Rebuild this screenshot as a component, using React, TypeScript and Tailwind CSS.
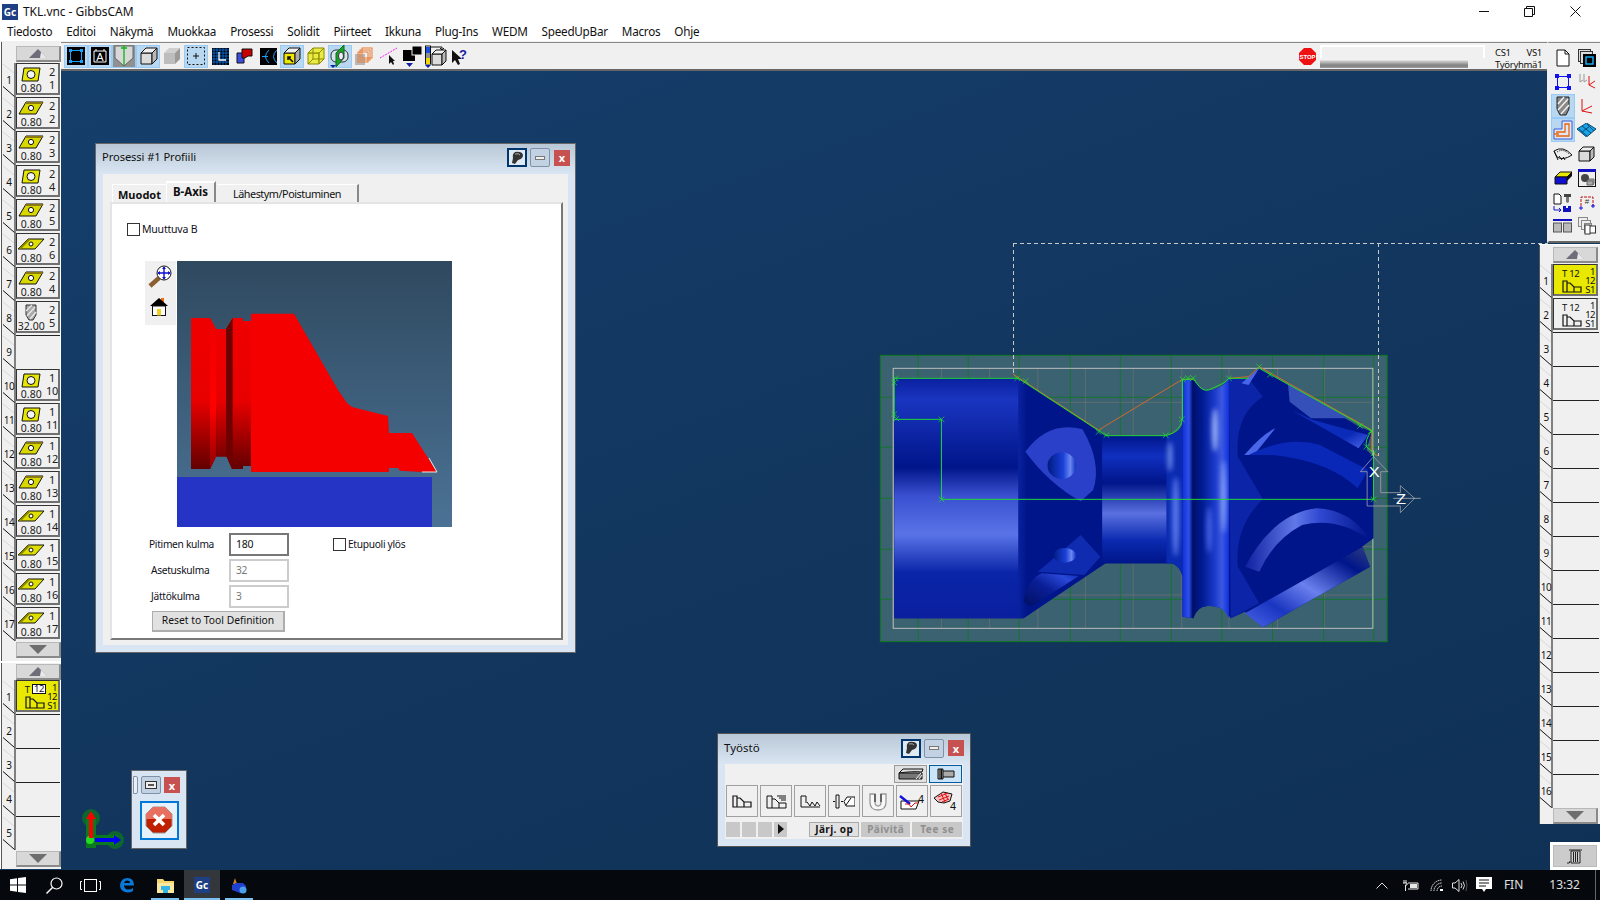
import React from "react";

type Kind = "sq" | "para" | "thin" | "mill";

const Tab = () => (
  <svg className="absolute left-0 top-0 w-[14px] h-[34px]" viewBox="0 0 14 34">
    <path d="M1 1 L12 10" stroke="#d8d8d8" fill="none" />
    <path d="M1 23.5 L12.5 33.5 M13 0 V34" stroke="#111" fill="none" />
  </svg>
);

const Arrow = ({ up }: { up?: boolean }) => (
  <div className="h-[16px] w-[45px] ml-[14px] bg-[#d8d8d8] border border-[#b8b8b8] border-r-2 border-b-2 border-r-[#8a8a8a] border-b-[#8a8a8a] flex items-center justify-center">
    <svg width="20" height="11" viewBox="0 0 20 11">
      {up ? (
        <>
          <path d="M10 1 L19 10 H1Z" fill="#6e6e7a" />
          <path d="M13 4 L19 10 H12Z" fill="#fff" opacity=".85" />
        </>
      ) : (
        <path d="M1 1 H19 L10 10Z" fill="#6e6e6e" />
      )}
    </svg>
  </div>
);

const InsertIcon = ({ kind }: { kind: Kind }) => {
  if (kind === "sq")
    return (
      <svg width="20" height="15" viewBox="0 0 20 15">
        <path d="M3 1 H19 L17 14 H1Z" fill="#e6e600" stroke="#111" />
        <circle cx="10" cy="7.5" r="4" fill="#f4f4f4" stroke="#111" />
      </svg>
    );
  if (kind === "para")
    return (
      <svg width="26" height="15" viewBox="0 0 26 15">
        <path d="M8 1 H25 L18 13 H1Z" fill="#d8d800" stroke="#111" />
        <path d="M8 1 H25 L24 3 H7Z" fill="#8a7a10" />
        <circle cx="13" cy="7" r="2.6" fill="#fff" stroke="#111" />
      </svg>
    );
  if (kind === "thin")
    return (
      <svg width="28" height="15" viewBox="0 0 28 15">
        <path d="M11 2 H27 L18 12 H1Z" fill="#dede00" stroke="#111" />
        <path d="M1 12 L11 2 H14 L5 11Z" fill="#888800" />
        <circle cx="14" cy="7" r="2" fill="#fff" stroke="#111" />
      </svg>
    );
  return (
    <svg width="12" height="17" viewBox="0 0 12 17">
      <path d="M1 1 H11 V11 L8 16 H4 L1 11Z" fill="#a8a8a8" stroke="#333" />
      <path d="M1 7 L7 1 M2 12 L10 3 M5 15 L11 8" stroke="#e8e8e8" strokeWidth="1.4" />
    </svg>
  );
};

const ToolRow = ({ n, top, bot, kind, size = "0.80" }: { n: number; top?: string; bot?: string; kind?: Kind; size?: string }) => (
  <div className="relative h-[34px] flex">
    <Tab />
    <div className="w-[14px] pl-[1px] pr-[1px] flex items-center justify-center text-[10px] tracking-[-0.5px] text-[#111] leading-none">{n}</div>
    {kind ? (
      <div className="w-[45px] h-[32px] bg-[#f0f0f0] border border-[#333] border-r-2 border-b-2 border-r-[#707070] border-b-[#707070] flex text-[11px] leading-none text-[#222]">
        <div className="w-[29px] flex flex-col items-center justify-between pt-[2px]">
          <div className="h-[17px] flex items-center">
            <InsertIcon kind={kind} />
          </div>
          <span className="text-[10.5px] leading-[10px]">{size}</span>
        </div>
        <div className="flex-1 flex flex-col items-center pt-[2px] gap-[2px] text-[11px] tracking-[-0.5px]">
          <span>{top}</span>
          <span>{bot}</span>
        </div>
      </div>
    ) : (
      <div className="w-[46px] h-[34px] border-t border-[#222]" />
    )}
  </div>
);

const Profile = ({ w = 20 }: { w?: number }) => (
  <svg width={w} height="13" viewBox="0 0 20 13">
    <path d="M1 1 H5 V3 H8 L12 7 H19 V12 H1Z M5 3 V12 M12 7 V12" fill="none" stroke="#111" strokeWidth="1.2" />
  </svg>
);

const OpRow = ({ n, yellow, boxed }: { n: number; yellow?: boolean; boxed?: boolean }) => (
  <div className="relative h-[34px] flex">
    <Tab />
    <div className="w-[14px] flex items-center justify-center text-[10px] text-[#111] leading-none">{n}</div>
    <div className={`w-[45px] h-[32px] border border-[#333] border-r-2 border-b-2 border-r-[#707070] border-b-[#707070] flex text-[9.5px] leading-[9px] text-[#111] ${yellow ? "bg-[#e8e800]" : "bg-[#f0f0f0]"}`}>
      <div className="flex-1 pt-[1px] flex flex-col">
        <div className="flex items-center gap-[2px] h-[14px] pl-[8px]">
          <span>T</span>
          {boxed ? <span className="bg-white border border-[#111] px-[1px] leading-[8px] tracking-[-0.5px]">12</span> : <span className="tracking-[-0.5px]">12</span>}
        </div>
        <div className="pl-[8px]"><Profile w={20} /></div>
      </div>
      <div className="w-[12px] flex flex-col items-end pr-[1px] pt-[2px] tracking-[-0.5px]">
        <span>1</span>
        <span>12</span>
        <span>S1</span>
      </div>
    </div>
  </div>
);

const EmptyRow = ({ n }: { n: number }) => <ToolRow n={n} />;

const leftTools: { top: string; bot: string; kind: Kind; size?: string }[] = [
  { top: "2", bot: "1", kind: "sq" },
  { top: "2", bot: "2", kind: "para" },
  { top: "2", bot: "3", kind: "para" },
  { top: "2", bot: "4", kind: "sq" },
  { top: "2", bot: "5", kind: "para" },
  { top: "2", bot: "6", kind: "thin" },
  { top: "2", bot: "4", kind: "para" },
  { top: "2", bot: "5", kind: "mill", size: "32.00" },
];
const leftTools2: { top: string; bot: string; kind: Kind }[] = [
  { top: "1", bot: "10", kind: "sq" },
  { top: "1", bot: "11", kind: "sq" },
  { top: "1", bot: "12", kind: "para" },
  { top: "1", bot: "13", kind: "para" },
  { top: "1", bot: "14", kind: "thin" },
  { top: "1", bot: "15", kind: "thin" },
  { top: "1", bot: "16", kind: "thin" },
  { top: "1", bot: "17", kind: "thin" },
];

const TB = ({ active, children }: { active?: boolean; children: React.ReactNode }) => (
  <div className={`w-[24px] h-[23px] shrink-0 flex items-center justify-center border ${active ? "bg-[#b8d8f2] border-[#98cbf5]" : "border-transparent"}`}>{children}</div>
);
const S = ({ children, w = 20, h = 20 }: { children: React.ReactNode; w?: number; h?: number }) => (
  <svg width={w} height={h} viewBox={`0 0 ${w} ${h}`}>
    {children}
  </svg>
);
const Cube = ({ fill = "#dcdcdc", stroke = "#111" }: { fill?: string; stroke?: string }) => (
  <S>
    <g stroke={stroke} fill={fill} strokeWidth="1">
      <path d="M3 7 H14 V18 H3Z" />
      <path d="M3 7 L8 2 H19 L14 7Z" fill="#f0f0f0" />
      <path d="M14 7 L19 2 V13 L14 18Z" fill="#b8b8b8" />
    </g>
  </S>
);

const toolbar: { a?: boolean; i: React.ReactNode }[] = [
  { a: true, i: <S w={18} h={18}><rect width="18" height="18" fill="#000" /><rect x="3.5" y="3.5" width="11" height="11" fill="none" stroke="#19a3ff" /><path d="M2 2h3v3H2zM13 2h3v3h-3zM2 13h3v3H2zM13 13h3v3h-3z" fill="#19a3ff" /></S> },
  { a: true, i: <S w={18} h={18}><rect width="18" height="18" fill="#000" /><path d="M3 4 V15 H15 V4 H13 V2 M3 4 H5 V2 M5 4 H13" fill="none" stroke="#fff" /><text x="9" y="14" fontSize="11" fill="#fff" textAnchor="middle" fontFamily="Liberation Sans">A</text></S> },
  { a: true, i: <S w={22} h={22}><rect width="22" height="22" fill="#909090" /><path d="M2 1 H20 V13 L11 21 L2 13Z" fill="#d8d8d8" stroke="#666" /><path d="M11 0 V20 M8 3 H14" stroke="#0bb515" strokeWidth="1.3" /></S> },
  { a: true, i: <Cube /> },
  { i: <S><path d="M2 7 H13 V18 H2Z" fill="#bdbdbd" /><path d="M2 7 L7 2 H18 L13 7Z" fill="#cfcfcf" /><path d="M13 7 L18 2 V13 L13 18Z" fill="#9a9a9a" /></S> },
  { a: true, i: <S w={18} h={18}><rect x=".5" y=".5" width="17" height="17" fill="none" stroke="#111" strokeDasharray="2 2" /><path d="M9 6 V12 M6 9 H12" stroke="#111" /></S> },
  { i: <S w={17} h={17}><rect width="17" height="17" fill="#000" /><path d="M2 0V17M5 0V17M8 0V17M11 0V17M14 0V17M0 2H17M0 5H17M0 8H17M0 11H17M0 14H17" stroke="#0a73e8" strokeWidth=".8" /><path d="M7 4 V12 H14" stroke="#fff" strokeWidth="1.3" fill="none" /></S> },
  { i: <S w={17} h={16}><path d="M1 5 H8 V15 H1Z" fill="#3b4ee0" stroke="#111" /><path d="M6 1 H16 V8 H12 L9 10 H6Z" fill="#c80000" stroke="#111" /></S> },
  { i: <S w={17} h={17}><rect width="17" height="17" fill="#000" /><path d="M9 2 Q2 8.5 9 15 M17 2 Q10 8.5 17 15 M2 8.5 H8" stroke="#19a3ff" fill="none" /></S> },
  { a: true, i: <S><g stroke="#111"><path d="M2 7 H13 V18 H2Z" fill="#f0e800" /><path d="M2 7 L7 2 H18 L13 7Z" fill="#eee" /><path d="M13 7 L18 2 V13 L13 18Z" fill="#aaa" /></g><path d="M11 16 L6 11 M6 14 V11 H9" stroke="#111" strokeWidth="1.6" fill="none" /></S> },
  { i: <S><g stroke="#8a8a00" fill="#e8e800" fillOpacity=".7"><path d="M2 7 H13 V18 H2Z" /><path d="M2 7 L7 2 H18 L13 7Z" /><path d="M13 7 L18 2 V13 L13 18Z" /><path d="M7 2 V13 H18 M7 13 L2 18" fill="none" /></g></S> },
  { a: true, i: <S w={22} h={23}><rect x="2" y="5" width="17" height="12" rx="5" fill="#d8e4ee" stroke="#333" /><path d="M7 8 L15 0 V13 L7 22Z" fill="#1aa52a" stroke="#0a6a12" /><ellipse cx="12" cy="11" rx="2.5" ry="4" fill="#eef" stroke="#333" /><path d="M1 20 H7 L4 23Z" fill="#1020a0" /></S> },
  { i: <S w={18} h={18}><path d="M0 7 H10 V18 H0Z" fill="#b8b8b8" /><g fill="none" stroke="#e87830"><rect x="3" y="5" width="10" height="10" /><rect x="5" y="3" width="10" height="10" /><rect x="7" y="1" width="10" height="10" /></g></S> },
  { i: <S w={17} h={18}><path d="M0 11 L17 1" stroke="#f020f0" strokeDasharray="2 1" /><path d="M9 8 V17 L11 15 L13 18 L14 17 L13 14 H15Z" fill="#111" /></S> },
  { i: <S w={19} h={23}><rect x="0" y="5" width="12" height="11" fill="#000" /><rect x="9" y="1" width="10" height="9" fill="#000" stroke="#f0f0f0" /><path d="M3 18 H10 L6.5 22Z" fill="#1020a0" /></S> },
  { i: <S w={22} h={23}><rect x=".5" y="1" width="5" height="18" fill="#fff" stroke="#111" /><rect x="1" y="2" width="4" height="6" fill="#1a50e0" /><rect x="1" y="8" width="4" height="5" fill="#909090" /><rect x="1" y="13" width="4" height="6" fill="#f0d800" /><g stroke="#111"><path d="M7 9 H17 V20 H7Z" fill="#dcdcdc" /><path d="M7 9 L11 5 H21 L17 9Z" fill="#f0f0f0" /><path d="M17 9 L21 5 V16 L17 20Z" fill="#b8b8b8" /></g><path d="M6 2 H17 V4 M15 3 L17 5 L19 3" stroke="#111" fill="none" /><path d="M0 20 H6 L3 23Z" fill="#1020a0" /></S> },
  { i: <S w={18} h={18}><path d="M1 3 V16 L4 13 L7 18 L9 17 L7 12 H11Z" fill="#111" /><text x="8" y="12" fontSize="13" fontWeight="700" fill="#1a1aa0" fontFamily="Liberation Sans">?</text></S> },
];

const rightIcons: { a?: boolean; i: React.ReactNode }[] = [
  { i: <S w={14} h={18}><path d="M1 1 H9 L13 5 V17 H1Z" fill="#fff" stroke="#111" /><path d="M9 1 V5 H13" fill="none" stroke="#111" /></S> },
  { i: <S w={18} h={18}><rect x=".5" y=".5" width="12" height="12" fill="#ddd" stroke="#333" /><rect x="2.5" y="2.5" width="12" height="12" fill="#ddd" stroke="#333" /><rect x="5" y="5" width="13" height="13" fill="#000" /><rect x="8" y="8" width="7" height="7" fill="none" stroke="#19b5ff" strokeWidth="1.4" /></S> },
  { i: <S w={16} h={16}><rect x="2.5" y="2.5" width="11" height="11" fill="#fff" fillOpacity="0" stroke="#1010f0" /><path d="M0 0h4v4H0zM12 0h4v4h-4zM0 12h4v4H0zM12 12h4v4h-4z" fill="#1010f0" /></S> },
  { i: <S w={18} h={18}><path d="M2 1 V9 L5 7 M6 1 V9 L9 7" stroke="#999" fill="none" /><path d="M11 3 V12 L17 8 M11 12 L17 15" stroke="#e01010" fill="none" /></S> },
  { a: true, i: <S w={14} h={20}><path d="M1 1 H13 V13 L10 19 H4 L1 13Z" fill="#888" stroke="#222" /><path d="M2 8 L8 1 M2 14 L12 3 M5 18 L13 9" stroke="#eee" strokeWidth="1.5" /></S> },
  { i: <S w={14} h={16}><path d="M2 1 V13 L12 8 M2 13 L12 15" stroke="#e01010" fill="none" /></S> },
  { a: true, i: <S w={20} h={20}><path d="M1 9 H9 V1 H19 V19 H1Z" fill="#dfe7f5" stroke="#3a5bd0" /><path d="M3 12 H12 V4 H16 V16 H3 M1 14 H6" stroke="#e8640a" strokeWidth="1.3" fill="none" /></S> },
  { i: <S w={19} h={14}><path d="M9.5 0 L19 6 L9.5 14 L0 6Z" fill="#19a3e8" stroke="#0a4a70" /><path d="M5 3 L14 10 M10 1 L17 8 M5 9 L13 3 M2 6 L10 13" stroke="#0a4a70" fill="none" /></S> },
  { i: <S w={20} h={14}><path d="M1 4 Q10 -2 19 8 Q10 14 4 10Z" fill="#eee" stroke="#111" /><path d="M4 5 Q10 1 16 7" stroke="#111" strokeDasharray="1 1" fill="none" /><path d="M1 4 L5 13 M6 9 l3 4 M10 10 l2 3" stroke="#111" /></S> },
  { i: <S w={17} h={16}><path d="M1 5 H12 V15 H1Z" fill="#dcdcdc" stroke="#111" /><path d="M1 5 L5 1 H16 L12 5Z" fill="#eee" stroke="#111" /><path d="M12 5 L16 1 V11 L12 15Z" fill="#bbb" stroke="#111" /></S> },
  { i: <S w={20} h={14}><path d="M2 6 L7 1 H19 L14 6Z" fill="#e8e800" stroke="#111" /><path d="M14 6 L19 1 V5 L14 10Z" fill="#111" /><path d="M2 6 H14 V13 H2Z" fill="#1010d0" stroke="#111" /></S> },
  { i: <S w={18} h={18}><rect x=".5" y=".5" width="17" height="17" fill="#eee" stroke="#111" /><rect y="0" width="18" height="3" fill="#1010c0" /><circle cx="7" cy="9" r="4" fill="#444" /><path d="M9 12 H15 V16 H9Z M9 12 L11 10 H16 V14 L15 16" fill="#aaa" stroke="#666" /></S> },
  { i: <S w={19} h={19}><path d="M1 1 H6 L8 3 V11 H1Z" fill="#fff" stroke="#111" /><rect x="11" y="1" width="7" height="3" fill="#444" /><path d="M13 4 H16 V9 L14.5 10 L13 9Z" fill="#777" /><path d="M10 13 H13 V15 H15 V13 H18 V19 H10Z" fill="#1010c0" /><path d="M1 13 V17 H8 M6 15 L8 17 L6 19" stroke="#1010d0" fill="none" /></S> },
  { i: <S w={16} h={16}><path d="M2 12 V3 H14 V12" stroke="#c01010" strokeDasharray="3 1" fill="none" /><text x="8" y="10" fontSize="8" fill="#333" textAnchor="middle" fontFamily="Liberation Sans">#</text><path d="M0 14 H4 M2 12 V16 M12 12 H16 M14 10 V14" stroke="#1010e0" /></S> },
  { i: <S w={19} h={14}><rect y="0" width="19" height="2" fill="#1010c0" /><rect x="0.5" y="4" width="8" height="9" fill="#bbb" stroke="#555" /><rect x="10.5" y="4" width="8" height="9" fill="#bbb" stroke="#555" /></S> },
  { i: <S w={18} h={18}><g fill="#eee" stroke="#888"><rect x=".5" y=".5" width="9" height="9" /><rect x="3.5" y="3.5" width="9" height="9" /><rect x="6.5" y="6.5" width="7" height="9" /></g><rect x="11" y="9" width="6.5" height="7" fill="#fff" stroke="#333" /><rect x="7" y="8" width="5" height="9" fill="#fff" stroke="#333" /></S> },
];

const WinBtns = () => (
  <div className="flex items-center gap-[3px]">
    <div className="w-[20px] h-[19px] bg-[#dfeaf5] border-2 border-[#00366e] flex items-center justify-center">
      <svg width="14" height="14" viewBox="0 0 14 14">
        <path d="M5 1 Q12 0 13 4 Q13 8 8 9 L5 13 L2 12 L3 7 Q2 3 5 1Z" fill="#333" />
        <path d="M5 3 Q9 2 10 4" stroke="#aaa" fill="none" />
      </svg>
    </div>
    <div className="w-[20px] h-[19px] rounded-[2px] bg-[#c3d2e2] border border-[#7e93aa] flex items-center justify-center">
      <div className="w-[10px] h-[4px] bg-[#f0f0f0] border border-[#777]" />
    </div>
    <div className="w-[16px] h-[16px] ml-[1px] bg-[#c75050] flex items-center justify-center text-white text-[11px] font-bold leading-none">x</div>
  </div>
);

const OpIcon = ({ children }: { children: React.ReactNode }) => (
  <div className="w-[32px] h-[32px] bg-[#f0f0f0] border border-[#a0a0a0] flex items-center justify-center">{children}</div>
);

const Part = () => {
  const majorX = [135, 275, 418, 561, 701, 844, 985, 1127, 1270, 1410];
  const majorY = [172, 322, 475, 628, 778];
  const minorX = [200, 335, 470, 603, 737, 873, 1005, 1141, 1273];
  const minorY = [187, 470, 620, 765];
  const nodes: [number, number][] = [
    [72, 115], [68, 128], [68, 222], [74, 236], [200, 238], [200, 478], [412, 115], [436, 123], [640, 276], [662, 285], [828, 286], [873, 238], [875, 118], [890, 114], [905, 114], [1005, 115], [1090, 80], [1120, 104], [1372, 258], [1402, 274], [1390, 320], [1410, 340], [1410, 478],
  ];
  return (
    <svg className="absolute left-[870px] top-[340px] w-[560px] h-[310px]" viewBox="0 0 1568 930" preserveAspectRatio="none">
      <defs>
        <filter id="bl" x="-100%" y="-50%" width="300%" height="200%"><feGaussianBlur stdDeviation="7" /></filter>
        <linearGradient id="ga" x1="0" y1="0" x2="0" y2="1">
          <stop offset="0" stopColor="#0a20a0" /><stop offset=".09" stopColor="#1a35c0" /><stop offset=".37" stopColor="#00158a" /><stop offset=".49" stopColor="#3a50d0" /><stop offset=".65" stopColor="#5a74e8" /><stop offset=".81" stopColor="#0a25a8" /><stop offset="1" stopColor="#0a1fa0" />
        </linearGradient>
        <linearGradient id="gn" x1="0" y1="0" x2="0" y2="1">
          <stop offset="0" stopColor="#00158a" /><stop offset=".16" stopColor="#1030c0" /><stop offset=".37" stopColor="#00158a" /><stop offset=".61" stopColor="#5a70e0" /><stop offset=".82" stopColor="#0a2ab0" /><stop offset="1" stopColor="#00158a" />
        </linearGradient>
        <linearGradient id="gw" x1="0" y1="0" x2="1" y2="0">
          <stop offset="0" stopColor="#1030d8" /><stop offset=".14" stopColor="#3050e8" /><stop offset=".22" stopColor="#00106a" /><stop offset=".42" stopColor="#001a90" /><stop offset=".68" stopColor="#1a38c8" /><stop offset=".85" stopColor="#3a58e0" /><stop offset="1" stopColor="#1030e0" />
        </linearGradient>
        <linearGradient id="gc" x1="0" y1="0" x2="1" y2="0">
          <stop offset="0" stopColor="#0a22a0" /><stop offset=".1" stopColor="#00158a" /><stop offset="1" stopColor="#00158a" />
        </linearGradient>
        <linearGradient id="gh" x1="0" y1="0" x2="1" y2="0">
          <stop offset="0" stopColor="#1020a0" /><stop offset=".4" stopColor="#6078e8" /><stop offset=".6" stopColor="#3048d0" /><stop offset="1" stopColor="#00158a" />
        </linearGradient>
        <linearGradient id="gb" x1="0" y1="1" x2="1" y2="0">
          <stop offset="0" stopColor="#4a66e8" /><stop offset=".25" stopColor="#1a35c0" /><stop offset=".5" stopColor="#6a80ee" /><stop offset=".8" stopColor="#00158a" /><stop offset="1" stopColor="#304080" />
        </linearGradient>
        <linearGradient id="gf" x1="0" y1="1" x2="1" y2="0">
          <stop offset="0" stopColor="#000f60" /><stop offset=".5" stopColor="#0a1f98" /><stop offset=".8" stopColor="#2a48d8" /><stop offset="1" stopColor="#0a2ab0" />
        </linearGradient>
        <linearGradient id="gu" x1="0" y1="0" x2="1" y2="1">
          <stop offset="0" stopColor="#1030c0" /><stop offset=".7" stopColor="#0a2ab8" /><stop offset="1" stopColor="#4a66e8" />
        </linearGradient>
        <linearGradient id="gh2" x1="0" y1="0" x2="1" y2="0"><stop offset="0" stopColor="#001a80" /><stop offset=".55" stopColor="#1a40d8" /><stop offset=".8" stopColor="#6a88f0" /><stop offset="1" stopColor="#1030c0" /></linearGradient>
      </defs>
      <rect x="29" y="46" width="1419" height="859" fill="#3a6270" stroke="#0c7a1c" strokeWidth="3" />
      {minorX.map((x) => <path key={x} d={`M${x} 85 V865`} stroke="#7e7672" strokeWidth="1.6" />)}
      {minorY.map((y) => <path key={y} d={`M65 ${y} H1408`} stroke="#7e7672" strokeWidth="1.6" />)}
      {majorX.map((x) => <path key={x} d={`M${x} 46 V905`} stroke="#0c7a1c" strokeWidth="2.2" />)}
      {majorY.map((y) => <path key={y} d={`M29 ${y} H1448`} stroke="#0c7a1c" strokeWidth="2.2" />)}
      <rect x="65" y="85" width="1343" height="780" fill="none" stroke="#bcbcbc" strokeWidth="3" />

      <path d="M68 115 H415 L640 272 L660 287 H830 Q870 280 875 250 V118 H905 Q925 155 945 152 Q985 150 1005 115 H1060 L1090 85 L1125 105 L1370 260 L1405 275 L1390 330 L1410 350 V595 L1378 620 L1400 680 L1100 862 L1050 815 L1010 835 Q990 795 945 798 Q915 800 905 835 L875 830 V710 Q870 680 845 670 H650 L430 835 H68Z" fill="#00158a" />
      <path d="M68 115 H418 V835 H78 Q68 835 68 825Z" fill="url(#ga)" />
      <path d="M415 115 L640 272 L660 287 V670 L430 835 H415Z" fill="url(#gc)" />
      <rect x="650" y="287" width="195" height="383" fill="url(#gn)" />
      <path d="M830 287 Q870 280 875 250 V710 Q870 680 845 670 H830Z" fill="#0a2ab0" />
      <ellipse cx="840" cy="350" rx="6" ry="45" fill="#7a98f4" filter="url(#bl)" />
      <ellipse cx="856" cy="530" rx="10" ry="120" fill="#5a78ee" filter="url(#bl)" />
      <path d="M875 118 H905 Q925 155 945 152 Q985 150 1005 115 V835 Q990 795 945 798 Q915 800 905 835 L875 830Z" fill="url(#gw)" />
      <ellipse cx="966" cy="270" rx="8" ry="65" fill="#a0b8fa" filter="url(#bl)" />
      <ellipse cx="990" cy="470" rx="7" ry="110" fill="#8aa4f8" filter="url(#bl)" />
      <ellipse cx="950" cy="570" rx="7" ry="70" fill="#4a68e8" filter="url(#bl)" />
      <path d="M1005 115 H1060 L1100 170 Q1020 225 1030 350 L1100 478 Q1020 560 1030 680 L1090 790 L1010 835Z" fill="#0c25a8" />
      <path d="M1170 130 L1340 235 H1235 L1175 185Z" fill="#3550b8" />
      <path d="M1240 240 L1395 285 L1368 325 L1180 210Z" fill="url(#gu)" />
      <path d="M1048 345 Q1100 280 1135 265 L1075 345Z" fill="#4a66e8" />
      <path d="M1060 345 Q1170 285 1260 315 L1395 390 L1365 445 Q1290 365 1130 345Z" fill="#0a28b8" />
      <path d="M1050 680 Q1130 520 1250 505 Q1350 510 1400 600 Q1310 530 1210 555 Q1130 600 1090 695Z" fill="url(#gh)" />
      <path d="M1050 820 L1380 620 L1400 680 L1100 862Z" fill="url(#gb)" />
      <path d="M1040 130 L1090 85 L1060 135Z" fill="#4a66e8" />
      <path d="M435 335 Q500 240 595 268 Q650 370 625 450 L590 484 Q500 430 435 335Z" fill="#2a40c8" />
      <circle cx="537" cy="377" r="40" fill="url(#gh2)" />
      <path d="M470 695 L590 585 L645 650 L600 705Z" fill="#0f2bb0" />
      <ellipse cx="545" cy="646" rx="32" ry="22" fill="url(#gh2)" />
      <path d="M430 785 Q440 720 480 700 L585 708 L450 800Z" fill="url(#gf)" />

      <path d="M400 102 L640 270 L875 118 H905 M1005 115 L1060 110 L1090 80 L1405 270 V335 L1423 348" fill="none" stroke="#f06a1a" strokeWidth="2.4" />
      <g fill="none" stroke="#1fe02a" strokeWidth="2.8">
        <path d="M68 235 V115 H415 L640 272 L660 287 H830 Q868 275 875 238 V118 H890 Q905 112 915 130 Q930 155 948 150 L985 132 Q998 125 1005 115 H1060" />
        <path d="M1090 85 L1405 272 Q1385 300 1390 320 L1410 338 V478 H200 V238 H68" />
      </g>
      <g fill="none" stroke="#1fe02a" strokeWidth="2">
        {nodes.map(([x, y], i) => <path key={i} d={`M${x - 8} ${y - 8} l16 16 m0 -16 l-16 16`} />)}
      </g>
      <path d="M1410 350 L1373 395 H1392 V498 H1485 V518 L1525 475 L1485 437 V458 H1430 V395 H1450Z" fill="none" stroke="#a8a8a8" strokeWidth="2.2" />
      <path d="M1465 475 H1542 M1410 330 V350" stroke="#c8c8c8" strokeWidth="2" />
      <text x="1412" y="410" fontSize="46" textAnchor="middle" fill="#fff" fontFamily="Liberation Sans">X</text>
      <text x="1487" y="492" fontSize="46" textAnchor="middle" fill="#fff" fontFamily="Liberation Sans">Z</text>
    </svg>
  );
};

const Preview = () => (
  <svg className="w-[275px] h-[266px]" viewBox="177 261 275 266">
    <defs>
      <linearGradient id="pbg" x1="0" y1="0" x2="0" y2="1"><stop offset="0" stopColor="#2f495f" /><stop offset="1" stopColor="#4b7295" /></linearGradient>
      <linearGradient id="pr" x1="0" y1="0" x2="0" y2="1"><stop offset="0" stopColor="#f00000" /><stop offset=".55" stopColor="#e80000" /><stop offset="1" stopColor="#620000" /></linearGradient>
      <linearGradient id="pr2" x1="0" y1="0" x2="0" y2="1"><stop offset="0" stopColor="#f00000" /><stop offset=".6" stopColor="#ff0000" /><stop offset="1" stopColor="#900000" /></linearGradient>
    </defs>
    <rect x="177" y="261" width="275" height="266" fill="url(#pbg)" />
    <path d="M251 313.7 H294 L338 390 L347 403 L352 407 L388 416 L389 433 H412 L437 472 H422 L400 470.7 L398 468 H389 V472 H251Z" fill="#f50000" />
    <path d="M191 318 H210 L216 329 H226 L232.7 318 H242.7 V321 H251 V466 H243 V469 H232 L226.7 456.7 H216 L210 469 H191Z" fill="url(#pr)" />
    <path d="M210 318 L216 329 V456.7 L210 469Z" fill="url(#pr2)" />
    <path d="M226 329 L232.7 318 V469 H232 L226.7 456.7 H226Z" fill="#6e0000" />
    <path d="M429 458 L437 472 H422" stroke="#e8e8e8" fill="none" />
    <rect x="177" y="477" width="255" height="50" fill="#2534c4" />
  </svg>
);

export default function App() {
  return (
    <div className="relative w-[1600px] h-[900px] overflow-hidden flex flex-col bg-white text-[#111] font-['Noto_Sans',sans-serif] text-[12px]">
      {/* Title bar */}
      <div className="h-[22px] flex items-center bg-white shrink-0 pt-[1px]">
        <div className="ml-[2px] w-[16px] h-[16px] bg-[#1f3f85] flex items-center justify-center text-white text-[10px] font-bold leading-none">Gc</div>
        <span className="ml-[5px] text-[12px] tracking-[-0.05px]">TKL.vnc - GibbsCAM</span>
        <div className="ml-auto mr-[2px] flex items-center">
          <div className="w-[45px] h-[22px] flex items-center justify-center">
            <div className="w-[10px] h-px bg-[#111]" />
          </div>
          <div className="w-[46px] h-[22px] flex items-center justify-center">
            <svg width="11" height="11" viewBox="0 0 11 11"><path d="M.5 2.5 H8.5 V10.5 H.5Z M2.5 2.5 V.5 H10.5 V8.5 H8.5" fill="none" stroke="#111" /></svg>
          </div>
          <div className="w-[46px] h-[22px] flex items-center justify-center">
            <svg width="11" height="11" viewBox="0 0 11 11"><path d="M.5 .5 L10.5 10.5 M10.5 .5 L.5 10.5" stroke="#111" /></svg>
          </div>
        </div>
      </div>
      {/* Menu */}
      <div className="h-[20px] flex items-center bg-white shrink-0 border-b border-[#f0f0f0] pt-[1px]">
        {["Tiedosto", "Editoi", "Näkymä", "Muokkaa", "Prosessi", "Solidit", "Piirteet", "Ikkuna", "Plug-Ins", "WEDM", "SpeedUpBar", "Macros", "Ohje"].map((m) => (
          <span key={m} className="px-[7px] text-[11.7px] tracking-[-0.25px]">{m}</span>
        ))}
      </div>
      {/* Main */}
      <div className="flex-1 flex min-h-0 bg-[linear-gradient(160deg,#153f6c_0%,#12365e_55%,#0f3156_100%)]">
        {/* Left lists */}
        <div className="w-[61px] shrink-0 bg-white flex flex-col gap-[2px] self-start">
          <div className="ml-[1px] w-[59px] bg-[#f0f0f0] border-l border-[#555] pt-[4px] h-[619px] flex flex-col">
            <div className="mb-[1px]"><Arrow up /></div>
            {leftTools.map((t, i) => <ToolRow key={i} n={i + 1} {...t} />)}
            <EmptyRow n={9} />
            {leftTools2.map((t, i) => <ToolRow key={i} n={i + 10} {...t} />)}
            <div className="mt-[1px]"><Arrow /></div>
          </div>
          <div className="ml-[1px] w-[59px] bg-[#f0f0f0] border-l border-[#555] pt-[1px] h-[206px] flex flex-col">
            <Arrow up />
            <OpRow n={1} yellow boxed />
            {[2, 3, 4, 5].map((n) => <EmptyRow key={n} n={n} />)}
            <div className="mt-[1px]"><Arrow /></div>
          </div>
        </div>
        {/* Center */}
        <div className="flex-1 min-w-0 flex flex-col">
          <div className="h-[29px] shrink-0 bg-[#f0f0f0] border-t border-[#888] border-b-2 border-b-[#666] flex items-center pl-[3px]">
            {toolbar.map((t, i) => <TB key={i} active={t.a}>{t.i}</TB>)}
            <div className="ml-auto flex items-center">
              <svg width="17" height="17" viewBox="0 0 17 17">
                <path d="M5 0 H12 L17 5 V12 L12 17 H5 L0 12 V5Z" fill="#ee1111" />
                <text x="8.5" y="11" fontSize="6" fontWeight="700" fill="#fff" textAnchor="middle" fontFamily="Liberation Sans">STOP</text>
              </svg>
              <div className="ml-[4px] w-[165px] flex flex-col">
                <div className="h-[13px] border-2 border-b-0 border-white" />
                <div className="w-[148px] h-[9px] mt-px bg-[linear-gradient(#fff,#c0c0c0_30%,#808080_70%,#999)]" />
              </div>
              <div className="ml-[10px] w-[47px] flex flex-col text-[9.5px] leading-[12px] mr-[5px] mt-[5px] tracking-[-0.3px]">
                <div className="flex justify-between"><span>CS1</span><span>VS1</span></div>
                <span className="whitespace-nowrap">Työryhmä1</span>
              </div>
            </div>
          </div>
          <div className="flex-1" />
        </div>
        {/* Right */}
        <div className="w-[53px] shrink-0 flex flex-col">
          <div className="h-[201px] bg-[#f0f0f0] border-t border-[#888] border-l-2 border-l-[#f0f0f0] border-b-2 border-b-[#666] pt-[3px] grid grid-cols-[24px_24px] auto-rows-[24px] justify-center">
            {rightIcons.map((t, i) => (
              <div key={i} className={`flex items-center justify-center border ${t.a ? "bg-[#b8d8f2] border-[#98cbf5]" : "border-transparent"}`}>{t.i}</div>
            ))}
          </div>
          <div className="-ml-[8px] w-[61px] mt-[1px] bg-[#f0f0f0] shadow-[inset_1px_0_0_#555] border-t border-t-white pt-[2px]">
            <div className="mb-[1px]"><Arrow up /></div>
            <OpRow n={1} yellow />
            <OpRow n={2} />
            {Array.from({ length: 14 }, (_, i) => <EmptyRow key={i} n={i + 3} />)}
            <Arrow />
          </div>
          <div className="mt-auto ml-[3px] h-[28px] bg-white p-[3px]">
            <div className="h-full bg-[#cccccc] border border-[#bbb] flex items-center justify-center">
              <svg width="16" height="16" viewBox="0 0 16 16">
                <path d="M2 2 H15 M4 3 H13 V15 H4Z M6.5 4 V14 M8.5 4 V14 M10.5 4 V14" stroke="#222" fill="none" />
                <path d="M0 15 Q3 16 3 13" stroke="#222" fill="none" />
              </svg>
            </div>
          </div>
        </div>
      </div>
      {/* Taskbar */}
      <div className="h-[30px] shrink-0 bg-[#05080d] flex items-center text-[#e0e0e0]">
        <div className="w-[36px] flex justify-center">
          <svg width="16" height="16" viewBox="0 0 16 16"><path d="M0 2.2 L7 1.2 V7.5 H0Z M8 1 L16 0 V7.5 H8Z M0 8.5 H7 V14.8 L0 13.8Z M8 8.5 H16 V16 L8 15Z" fill="#fff" /></svg>
        </div>
        <div className="w-[36px] flex justify-center">
          <svg width="17" height="17" viewBox="0 0 17 17"><circle cx="10.5" cy="6.5" r="5.5" fill="none" stroke="#fff" strokeWidth="1.2" /><path d="M6.5 10.5 L.5 16.5" stroke="#fff" strokeWidth="1.4" /></svg>
        </div>
        <div className="w-[36px] flex justify-center">
          <svg width="21" height="13" viewBox="0 0 21 13"><rect x="4.5" y=".5" width="12" height="12" fill="none" stroke="#fff" /><path d="M2 2.5 H.5 V10.5 H2 M19 2.5 H20.5 V10.5 H19" fill="none" stroke="#fff" /></svg>
        </div>
        <div className="w-[38px] flex justify-center">
          <svg width="16" height="16" viewBox="0 0 16 16"><path d="M1 8 Q2 1 8.5 1 Q15 1 15 8.5 H5 Q5.5 12.5 9 12.5 Q12 12.5 14 11 V14 Q11.5 15.5 8.5 15.5 Q1 15 1 8Z M5 6 H11 Q11 3.5 8 3.5 Q5.5 3.5 5 6Z" fill="#0a78d8" fillRule="evenodd" /></svg>
        </div>
        <div className="w-[36px] ml-[1px] h-full flex items-center justify-center relative">
          <svg width="17" height="15" viewBox="0 0 17 15"><path d="M0 1 H6 L7.5 3 H17 V15 H0Z" fill="#f3d76e" /><path d="M0 5 H17 V15 H0Z" fill="#fbe8a0" /><path d="M4 8 H13 V12 H11 V15 H6 V12 H4Z" fill="#35b5e5" /></svg>
          <div className="absolute bottom-0 inset-x-[4px] h-[2px] bg-[#7cc0f0]" />
        </div>
        <div className="w-[36px] ml-[1px] h-full bg-[#33363b] flex items-center justify-center relative">
          <div className="w-[16px] h-[16px] bg-[#1f3f85] text-white text-[10px] font-bold leading-[16px] text-center">Gc</div>
          <div className="absolute bottom-0 inset-x-0 h-[2px] bg-[#7cc0f0]" />
        </div>
        <div className="w-[28px] ml-[5px] h-full flex items-center justify-center relative">
          <svg width="16" height="17" viewBox="0 0 16 17"><path d="M4 1 L6 7 H2Z" fill="#d08020" /><path d="M1 8 L5 6 H12 L15 9 V14 L9 16 L1 13Z" fill="#2040d0" /><circle cx="12" cy="13" r="3.5" fill="#4aa0e8" /></svg>
          <div className="absolute bottom-0 inset-x-0 h-[2px] bg-[#7cc0f0]" />
        </div>
        <div className="ml-auto flex items-center h-full">
          <svg width="12" height="7" viewBox="0 0 12 7"><path d="M.5 6.5 L6 1 L11.5 6.5" stroke="#ddd" fill="none" /></svg>
          <svg className="ml-[15px]" width="16" height="11" viewBox="0 0 16 11"><path d="M1 0 V3 M3 0 V3 M0 3 H4 V5 H2.5 V11 M5 3 H15 V9 H5" stroke="#e8e8e8" fill="none" /><rect x="7" y="4" width="7" height="4" fill="#e8e8e8" /></svg>
          <svg className="ml-[11px]" width="13" height="12" viewBox="0 0 13 12"><path d="M1 12 A11 11 0 0 1 12 1 M4 12 A8 8 0 0 1 12 4 M7 12 A5 5 0 0 1 12 7" stroke="#e8e8e8" fill="none" strokeDasharray="1.5 .6" /><rect x="10" y="10" width="3" height="2" fill="#fff" /></svg>
          <svg className="ml-[9px]" width="16" height="13" viewBox="0 0 16 13"><path d="M.5 4 H3 L7 .5 V12.5 L3 9 H.5Z" fill="none" stroke="#ddd" /><path d="M9 4 Q11 6.5 9 9 M11 2.5 Q14 6.5 11 10.5" stroke="#ddd" fill="none" /><path d="M14 1 Q16 6.5 14 12" stroke="#555" fill="none" /></svg>
          <svg className="ml-[8px]" width="16" height="16" viewBox="0 0 16 16"><path d="M0 0 H16 V12 H10 L8 15 L6 12 H0Z" fill="#fff" /><path d="M3 3 H13 M3 6 H13 M3 9 H10" stroke="#111" /></svg>
          <span className="ml-[12px] text-[12px]">FIN</span>
          <span className="ml-[26px] text-[12px]">13:32</span>
          <div className="ml-[15px] mr-[4px] w-px h-full bg-[#666]" />
        </div>
      </div>

      <Part />
      {/* Floating: dashed selection */}
      <svg className="absolute left-[1013px] top-[243px] w-[535px] h-[215px]" viewBox="0 0 535 215">
        <path d="M0 .5 H535 M.5 0 V132 M365.5 0 V213" stroke="#c8c8c8" strokeDasharray="4 3" fill="none" />
      </svg>

      {/* Process dialog */}
      <div className="absolute left-[95px] top-[143px] w-[481px] h-[510px] border border-[#666] bg-[#d9e5f2] flex flex-col">
        <div className="h-[30px] shrink-0 bg-[linear-gradient(#b9c8d7,#d9e5f2)] flex items-center pl-[6px] pr-[5px] pb-[3px]">
          <span className="text-[11.2px] tracking-[-0.1px] text-[#111]">Prosessi #1 Profiili</span>
          <div className="ml-auto"><WinBtns /></div>
        </div>
        <div className="mx-[7px] mb-[7px] flex-1 bg-[#f0f0f0] pl-[7px] pr-[5px] flex flex-col">
          <div className="h-[28px] shrink-0 flex items-end pl-[2px] text-[12px]">
            <div className="w-[54px] h-[18px] bg-[#f0f0f0] border-t border-l border-white font-bold text-center leading-[19px] text-[#111] text-[11px]">Muodot</div>
            <div className="w-[50px] h-[21px] bg-[#f0f0f0] border-t-2 border-l border-white border-r-2 border-r-[#888] font-bold text-center leading-[17px] text-[#111] text-[11.5px]">B-Axis</div>
            <div className="w-[142px] h-[18px] ml-px bg-[#f0f0f0] border-t border-white border-r-2 border-r-[#888] text-center leading-[17px] text-[10.8px] tracking-[-0.45px]">Lähestym/Poistuminen</div>
          </div>
          <div className="h-[438px] bg-white border-2 border-[#e4e4e4] border-r-[#777] border-b-[#777] flex flex-col relative">
            <label className="mt-[18px] ml-[15px] flex items-center gap-[2px] h-[14px]">
              <span className="w-[13px] h-[13px] border border-[#333] bg-white" />
              <span className="text-[10.5px] tracking-[-0.2px] text-[#112] mt-[1px]">Muuttuva B</span>
            </label>
            <div className="mt-[25px] ml-[33px] flex items-start">
              <div className="w-[31px] h-[64px] mr-px bg-[#f0f0f0] flex flex-col items-start pl-[3px] pt-[4px] gap-[9px]">
                <svg width="24" height="23" viewBox="0 0 24 23"><path d="M11 13 L2 21" stroke="#8a6030" strokeWidth="4.5" /><circle cx="16" cy="8" r="7" fill="#fff" stroke="#111" /><path d="M16 2 V14 M10 8 H22" stroke="#1010d0" strokeWidth="1.4" /><path d="M14 4 L16 1.5 L18 4 M14 12 L16 14.5 L18 12 M12 6 L9.5 8 L12 10 M20 6 L22.5 8 L20 10" fill="#1010d0" /></svg>
                <svg className="ml-[2px]" width="18" height="19" viewBox="0 0 18 19"><path d="M11 1 H14 V6 L11 4Z" fill="#f07010" /><path d="M0 9 L9 1 L18 9Z" fill="#000" /><rect x="2.5" y="9" width="13" height="9.5" fill="#fff" stroke="#111" /><rect x="7" y="12" width="4" height="6.5" fill="#f0d020" /></svg>
              </div>
              <Preview />
            </div>
            <div className="ml-[37px] mt-[6px] grid grid-cols-[80px_60px_auto] auto-rows-[23px] gap-y-[3px] text-[10.2px] tracking-[-0.3px] text-[#112] items-center">
              <span>Pitimen kulma</span>
              <div className="h-[23px] border-2 border-[#777] pl-[5px] flex items-center text-[10.5px] text-[#111]">180</div>
              <label className="ml-[44px] flex items-center gap-[2px]"><span className="w-[13px] h-[13px] border border-[#333]" /><span>Etupuoli ylös</span></label>
              <span className="pl-[2px]">Asetuskulma</span>
              <div className="h-[23px] border-2 border-[#ccc] pl-[5px] flex items-center text-[#777]">32</div>
              <span />
              <span className="pl-[2px]">Jättökulma</span>
              <div className="h-[23px] border-2 border-[#ccc] pl-[5px] flex items-center text-[#777]">3</div>
              <span />
            </div>
            <div className="ml-[40px] mt-[3px] w-[133px] h-[21px] bg-[#e1e1e1] border border-[#adadad] border-b-2 border-r-2 flex items-center justify-center text-[10.3px]">Reset to Tool Definition</div>
          </div>
        </div>
      </div>

      {/* Työstö */}
      <div className="absolute left-[717px] top-[733px] w-[254px] h-[114px] border border-[#555] bg-[#d9e5f2] flex flex-col">
        <div className="h-[30px] shrink-0 bg-[linear-gradient(#b9c8d7,#d9e5f2)] flex items-center pl-[6px] pr-[6px] pb-[2px]">
          <span className="text-[11.5px]">Työstö</span>
          <div className="ml-auto"><WinBtns /></div>
        </div>
        <div className="mx-[7px] h-[75px] bg-[#f0f0f0] flex flex-col px-px">
          <div className="h-[21px] flex justify-end gap-[2px] pt-px">
            <div className="w-[33px] h-[18px] bg-[#e1e1e1] border border-[#999] flex items-center justify-center">
              <svg width="26" height="12" viewBox="0 0 26 12"><path d="M1 5 L5 1 H25 L24 4 Q15 3 1 5Z" fill="#ddd" stroke="#111" /><path d="M1 5 H24 V11 H1Z" fill="#777" stroke="#111" /><path d="M18 11 L23 5 M21 11 L24 7" stroke="#eee" /></svg>
            </div>
            <div className="w-[33px] h-[18px] bg-[#cce4f7] border border-[#005a9e] flex items-center justify-center">
              <svg width="18" height="12" viewBox="0 0 18 12"><path d="M1 1 H6 V11 H1Z M6 3 H17 V9 H6" fill="#aaa" stroke="#111" /><path d="M3 1 V11 M4.5 1 V11" stroke="#111" /></svg>
            </div>
          </div>
          <div className="h-[32px] flex justify-between gap-[2px]">
            <OpIcon><Profile /></OpIcon>
            <OpIcon><svg width="21" height="15" viewBox="0 0 21 15"><path d="M1 2 H6 V5 H9 L13 9 H20 V14 H1Z M6 5 V14 M13 9 V14" fill="none" stroke="#111" /><path d="M11 2 H20 M13 4 H20 M15 6 H20" stroke="#111" /></svg></OpIcon>
            <OpIcon><svg width="21" height="13" viewBox="0 0 21 13"><path d="M1 1 H6 V8 M1 1 V12 H20" fill="none" stroke="#111" /><path d="M7 7 L10 11 L12 7 L15 11 L17 7 L20 11" stroke="#111" fill="none" /></svg></OpIcon>
            <OpIcon><svg width="22" height="15" viewBox="0 0 22 15"><path d="M3 1 V14 M6 1 V14 M3 1 H6 M3 14 H6" stroke="#111" fill="none" /><path d="M0 7.5 H2 M8 7.5 H10" stroke="#111" /><path d="M11 7.5 L14 3 H22 V12 H13Z" fill="#fff" stroke="#111" /><path d="M13 11 L18 4" stroke="#111" /></svg></OpIcon>
            <OpIcon><svg width="18" height="19" viewBox="0 0 18 19"><path d="M1 2 H6 V10 Q6 14 9 14 Q12 14 12 10 V2 H17 V10 Q17 18 9 18 Q1 18 1 10Z" fill="#f8f8f8" stroke="#999" strokeWidth="1.3" /><path d="M6 2 V10 M12 2 V10" stroke="#444" strokeWidth="1.4" /></svg></OpIcon>
            <OpIcon><svg width="26" height="18" viewBox="0 0 26 18"><path d="M2 9 H20 L17 17 H2Z" fill="#fff" stroke="#111" /><path d="M1 4 L11 12" stroke="#1010e0" strokeWidth="2.4" /><path d="M6 12 H10 L12 15 L16 11 H19" stroke="#e01010" fill="none" /><text x="19" y="11" fontSize="11" fill="#111" fontFamily="Liberation Sans">4</text></svg></OpIcon>
            <OpIcon><svg width="26" height="22" viewBox="0 0 26 22"><path d="M1 8 L10 2 L19 4 L17 11 L11 13 L5 12Z" fill="#f4c0c0" stroke="#111" /><path d="M5 7 L15 3 M6 10 L16 6 M9 12 L16 9 M8 3 L12 12 M12 3 L15 10" stroke="#e01010" /><text x="17" y="20" fontSize="11" fill="#111" fontFamily="Liberation Sans">4</text></svg></OpIcon>
          </div>
          <div className="mt-[4px] h-[16px] flex items-center gap-[2px]">
            <div className="w-[14px] h-[15px] bg-[#c8c8c8]" />
            <div className="w-[14px] h-[15px] bg-[#c8c8c8]" />
            <div className="w-[14px] h-[15px] bg-[#c8c8c8]" />
            <div className="w-[14px] h-[15px] bg-[#c8c8c8] flex items-center justify-center"><svg width="6" height="10" viewBox="0 0 6 10"><path d="M0 0 L6 5 L0 10Z" fill="#111" /></svg></div>
            <div className="ml-[20px] w-[50px] h-[15px] bg-[#e1e1e1] border border-[#aaa] flex items-center justify-center text-[10px] font-bold tracking-[0.4px]">Järj. op</div>
            <div className="w-[50px] h-[15px] bg-[#c8c8c8] flex items-center justify-center text-[10px] font-bold tracking-[0.4px] text-[#8f8f8f]">Päivitä</div>
            <div className="w-[50px] h-[15px] bg-[#c8c8c8] flex items-center justify-center text-[10px] font-bold tracking-[0.6px] text-[#8f8f8f]">Tee se</div>
          </div>
        </div>
      </div>

      {/* Small stop window */}
      <div className="absolute left-[131px] top-[770px] w-[56px] h-[79px] bg-[#d9e5f2] border border-[#666] flex flex-col items-center">
        <div className="w-full flex items-center h-[28px] pl-[1px] gap-[3px]">
          <div className="w-[5px] h-[18px] bg-[#e8eef5] border border-[#7e93aa] rounded-r-[2px]" />
          <div className="w-[20px] h-[18px] rounded-[2px] bg-[#c3d2e2] border border-[#7e93aa] flex items-center justify-center">
            <div className="w-[12px] h-[8px] border border-[#333] bg-[#eee] flex items-center justify-center"><div className="w-[6px] h-[2px] bg-[#555]" /></div>
          </div>
          <div className="w-[16px] h-[16px] bg-[#c75050] flex items-center justify-center text-white text-[11px] font-bold leading-none">x</div>
        </div>
        <div className="mt-[2px] w-[39px] h-[39px] bg-[#e5f1fb] border-2 border-[#0078d7] flex items-center justify-center">
          <svg width="28" height="29" viewBox="0 0 28 29">
            <path d="M8 1 H20 L27 8 V20 L20 27 H8 L1 20 V8Z" fill="#c02000" stroke="#999" />
            <path d="M8 1 H20 L27 8 V13 H1 V8Z" fill="#e87060" />
            <path d="M9 9 L19 19 M19 9 L9 19" stroke="#fff" strokeWidth="3.6" />
          </svg>
        </div>
      </div>

      {/* Axis triad */}
      <svg className="absolute left-[80px] top-[804px] w-[48px] h-[48px]" viewBox="80 804 48 48">
        <g fill="#0b7a1e">
          <circle cx="91" cy="818" r="9" opacity=".7" />
          <circle cx="115" cy="840" r="9" opacity=".7" />
          <rect x="86" y="818" width="10" height="30" />
          <rect x="90" y="835" width="28" height="10" />
          <circle cx="90" cy="840" r="4" fill="#22dd22" />
        </g>
        <path d="M91 838 V818" stroke="#f00" strokeWidth="4" />
        <path d="M86 819 L91 811 L96 819Z" fill="#f00" />
        <path d="M95 840 H114" stroke="#0000f0" strokeWidth="4" />
        <path d="M114 835 L121 840 L114 845Z" fill="#0000f0" />
      </svg>
    </div>
  );
}
